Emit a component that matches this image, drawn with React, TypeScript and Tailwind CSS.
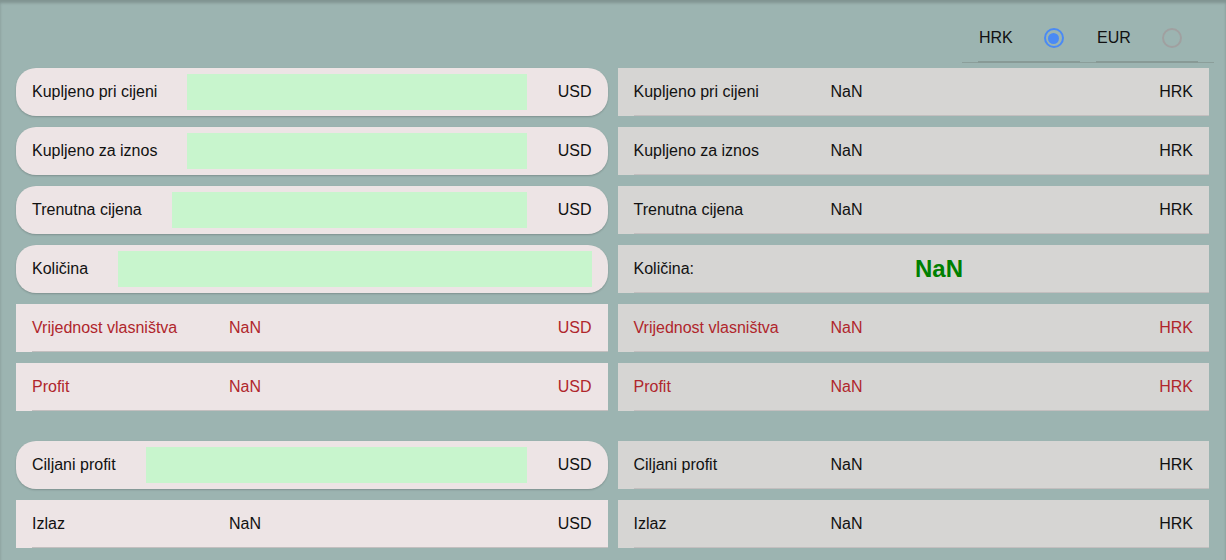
import React from 'react';

type Row =
  | { kind: 'input'; label: string; unit?: string }
  | { kind: 'value'; label: string; value: string; unit: string; red?: boolean }
  | { kind: 'big'; label: string; value: string };

const font = "font-['Liberation_Sans',Arial,sans-serif]";

function InputCard({ label, unit }: { label: string; unit?: string }) {
  return (
    <div className="h-12 flex items-center rounded-[20px] bg-[#ede4e5] pl-4 pr-4 shadow-[0_1px_2px_rgba(0,0,0,0.2)]">
      <span className="text-[#111] whitespace-nowrap">{label}</span>
      <div className="flex-1 h-9 ml-[30px] bg-[#c8f5cd]" />
      {unit && <span className="ml-[31px] text-[#111]">{unit}</span>}
    </div>
  );
}

function FlatCard({ row, bg }: { row: Row; bg: string }) {
  if (row.kind === 'big') {
    return (
      <div className={`h-12 pl-4 ${bg}`}>
        <div className="h-full flex items-center border-b border-[#c3bfbf] pr-4">
          <span className="text-[#111]">{row.label}</span>
          <span className="ml-[221px] text-[24px] font-bold text-[#008000]">{row.value}</span>
        </div>
      </div>
    );
  }
  if (row.kind !== 'value') return null;
  const color = row.red ? 'text-[#b0262c]' : 'text-[#111]';
  return (
    <div className={`h-12 pl-4 ${bg}`}>
      <div className={`h-full flex items-center border-b border-[#c3bfbf] pr-4 ${color}`}>
        <span className="w-[197px] shrink-0 whitespace-nowrap">{row.label}</span>
        <span className="flex-1">{row.value}</span>
        <span>{row.unit}</span>
      </div>
    </div>
  );
}

function Radio({ checked }: { checked?: boolean }) {
  return checked ? (
    <span className="w-5 h-5 rounded-full border-2 border-[#4a8af5] flex items-center justify-center">
      <span className="w-[11px] h-[11px] rounded-full bg-[#4a8af5]" />
    </span>
  ) : (
    <span className="block w-5 h-5 rounded-full border-2 border-[#a0a0a0]" />
  );
}

export default function App() {
  const left: Row[] = [
    { kind: 'input', label: 'Kupljeno pri cijeni', unit: 'USD' },
    { kind: 'input', label: 'Kupljeno za iznos', unit: 'USD' },
    { kind: 'input', label: 'Trenutna cijena', unit: 'USD' },
    { kind: 'input', label: 'Količina' },
    { kind: 'value', label: 'Vrijednost vlasništva', value: 'NaN', unit: 'USD', red: true },
    { kind: 'value', label: 'Profit', value: 'NaN', unit: 'USD', red: true },
  ];
  const right: Row[] = [
    { kind: 'value', label: 'Kupljeno pri cijeni', value: 'NaN', unit: 'HRK' },
    { kind: 'value', label: 'Kupljeno za iznos', value: 'NaN', unit: 'HRK' },
    { kind: 'value', label: 'Trenutna cijena', value: 'NaN', unit: 'HRK' },
    { kind: 'big', label: 'Količina:', value: 'NaN' },
    { kind: 'value', label: 'Vrijednost vlasništva', value: 'NaN', unit: 'HRK', red: true },
    { kind: 'value', label: 'Profit', value: 'NaN', unit: 'HRK', red: true },
  ];
  const leftBottom: Row[] = [
    { kind: 'input', label: 'Ciljani profit', unit: 'USD' },
    { kind: 'value', label: 'Izlaz', value: 'NaN', unit: 'USD' },
  ];
  const rightBottom: Row[] = [
    { kind: 'value', label: 'Ciljani profit', value: 'NaN', unit: 'HRK' },
    { kind: 'value', label: 'Izlaz', value: 'NaN', unit: 'HRK' },
  ];

  const renderLeft = (r: Row, i: number) =>
    r.kind === 'input' ? (
      <InputCard key={'l' + i} label={r.label} unit={r.unit} />
    ) : (
      <FlatCard key={'l' + i} row={r} bg="bg-[#ede4e5]" />
    );

  return (
    <div
      className={`${font} text-[16px] w-full h-[560px] bg-[#9cb4b1] shadow-[inset_0_3px_3px_rgba(0,0,0,0.18)] overflow-hidden`}
    >
      <div className="flex justify-end pr-3 pt-[15px]">
        <div className="flex gap-4 px-4 border-b border-[#8b9e9a]">
          <label className="w-[102px] h-12 flex items-center border-b-2 border-[#889a96] -mb-px pl-px">
            <span className="text-[#111]">HRK</span>
            <span className="ml-[31px]">
              <Radio checked />
            </span>
          </label>
          <label className="w-[102px] h-12 flex items-center border-b-2 border-[#889a96] -mb-px pl-px">
            <span className="text-[#111]">EUR</span>
            <span className="ml-[31px]">
              <Radio />
            </span>
          </label>
        </div>
      </div>

      <div className="mt-[5px] pl-4 pr-[17px] grid grid-cols-2 gap-x-[10px]">
        <div className="flex flex-col gap-[11px]">{left.map(renderLeft)}</div>
        <div className="flex flex-col gap-[11px]">
          {right.map((r, i) => (
            <FlatCard key={'r' + i} row={r} bg="bg-[#d6d5d3]" />
          ))}
        </div>
        <div className="flex flex-col gap-[11px] mt-[30px]">{leftBottom.map(renderLeft)}</div>
        <div className="flex flex-col gap-[11px] mt-[30px]">
          {rightBottom.map((r, i) => (
            <FlatCard key={'rb' + i} row={r} bg="bg-[#d6d5d3]" />
          ))}
        </div>
      </div>
    </div>
  );
}
